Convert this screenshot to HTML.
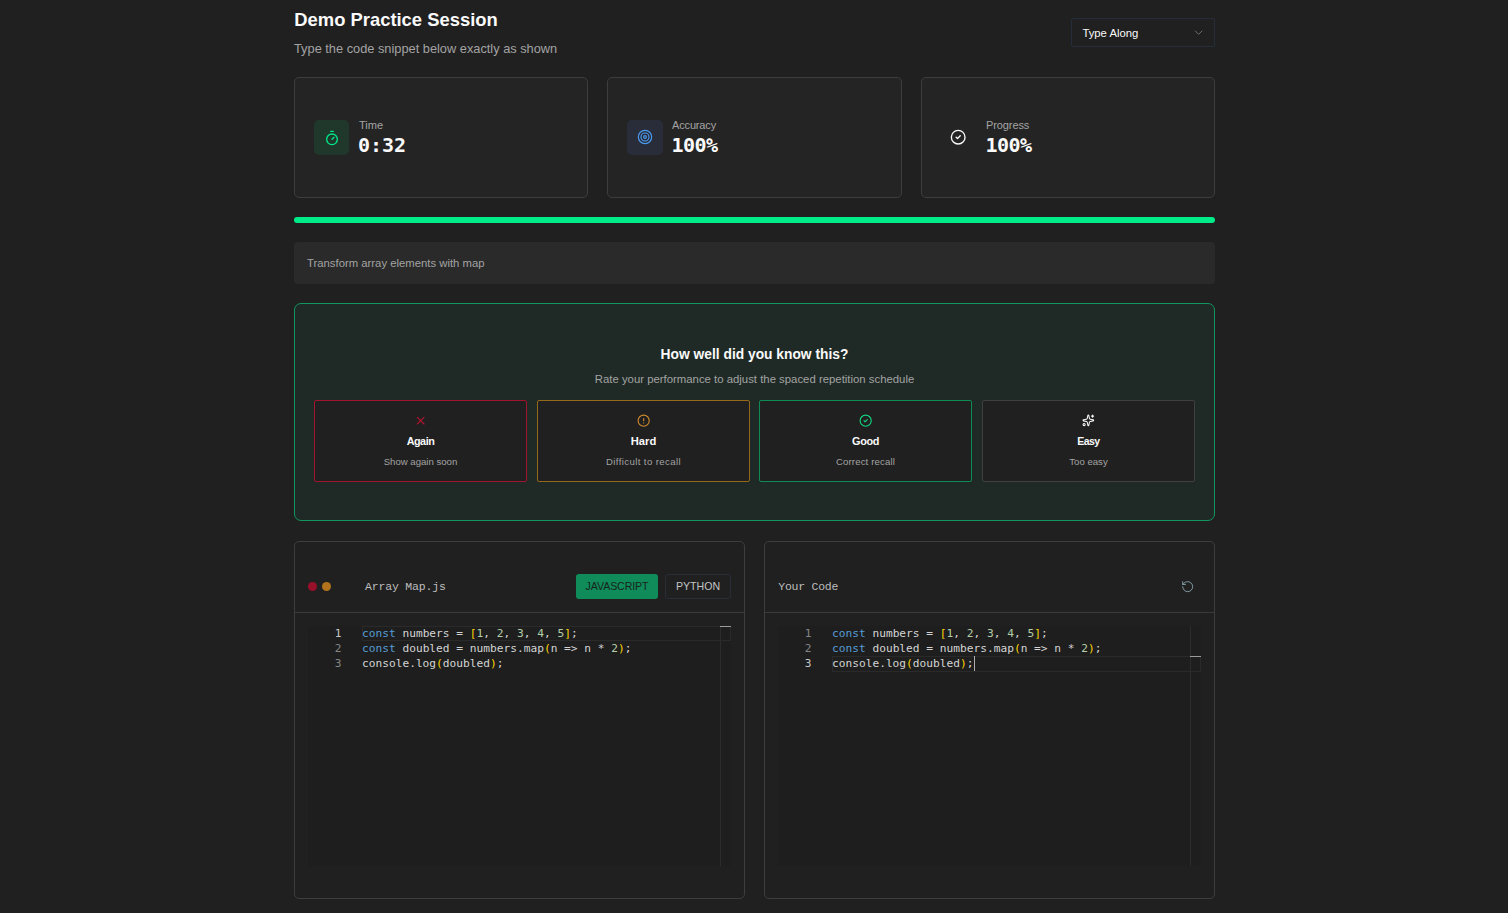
<!DOCTYPE html>
<html lang="en">
<head>
<meta charset="utf-8">
<title>Demo Practice Session</title>
<style>
*{box-sizing:border-box;margin:0;padding:0}
html,body{width:1508px;height:913px;overflow:hidden;background:#202020}
body{position:relative;font-family:"Liberation Sans",sans-serif;color:#fafafa;-webkit-font-smoothing:antialiased}
.abs{position:absolute}
.t{position:absolute;white-space:nowrap;line-height:1}
.mono{font-family:"Liberation Mono",monospace}
.dmono{font-family:"DejaVu Sans Mono",monospace}
.code{font-family:"DejaVu Sans Mono",monospace}
.card{position:absolute;background:#242424;border:1px solid #3d3d3d;border-radius:5px}
.muted{color:#a3a3a3}
svg{position:absolute;overflow:visible}
.ed{top:626px;width:423px;height:240px;background:#1e1e1e}
.ln{width:33.4px;text-align:right;font-size:11.2px;line-height:15px;color:#858585}
.ln.act{color:#c6c6c6}
.cl{font-size:11.2px;line-height:15px;color:#d4d4d4;white-space:pre}
.k{color:#569cd6}.b{color:#ffd700}.n{color:#b5cea8}
.rb{top:400px;width:213px;height:82px;border:1px solid;border-radius:2px;background:#202020}
.rl{top:435.5px;width:213px;text-align:center;font-size:11.2px;font-weight:700}
.rd{top:456.6px;width:213px;text-align:center;font-size:9.6px;color:#a3a3a3}
</style>
</head>
<body>
<!-- header -->
<div class="t" id="title" style="left:294.3px;top:10.5px;font-size:18.4px;font-weight:700;">Demo Practice Session</div>
<div class="t muted" id="subtitle" style="left:294px;top:43.2px;font-size:12.8px;">Type the code snippet below exactly as shown</div>
<div class="abs" id="select" style="left:1071px;top:18px;width:144px;height:29px;border:1px solid #252d3b;border-radius:2px;"></div>
<div class="t" id="seltext" style="left:1082.4px;top:28.1px;font-size:11.3px;">Type Along</div>
<svg id="chev" style="left:1192px;top:26px" width="13.33" height="13.33" viewBox="0 0 24 24" fill="none" stroke="#6d737a" stroke-width="1.7" stroke-linecap="round" stroke-linejoin="round"><path d="m6 9 6 6 6-6"/></svg>

<!-- stat cards -->
<div class="card" style="left:294px;top:77px;width:294px;height:121px"></div>
<div class="card" style="left:607px;top:77px;width:295px;height:121px"></div>
<div class="card" style="left:921px;top:77px;width:294px;height:121px"></div>

<div class="abs" style="left:314px;top:120px;width:35px;height:35px;border-radius:5px;background:#20372c"></div>
<svg style="left:323.5px;top:129.5px" width="16" height="16" viewBox="0 0 24 24" fill="none" stroke="#00e887" stroke-width="2" stroke-linecap="round" stroke-linejoin="round"><line x1="10" x2="14" y1="2" y2="2"/><line x1="12" x2="15" y1="14" y2="11"/><circle cx="12" cy="14" r="8"/></svg>
<div class="t muted" id="l1" style="left:359px;top:119.7px;font-size:11.1px;">Time</div>
<div class="t dmono" id="v1" style="left:358px;top:135px;font-size:20px;font-weight:700;">0:32</div>

<div class="abs" style="left:627px;top:120px;width:36px;height:35px;border-radius:5px;background:#292d3a"></div>
<svg style="left:637px;top:129px" width="16" height="16" viewBox="0 0 24 24" fill="none" stroke="#4a9af0" stroke-width="1.75" stroke-linecap="round" stroke-linejoin="round"><circle cx="12" cy="12" r="10"/><circle cx="12" cy="12" r="6"/><circle cx="12" cy="12" r="2"/></svg>
<div class="t muted" id="l2" style="left:672px;top:119.7px;font-size:11px;letter-spacing:-0.15px;">Accuracy</div>
<div class="t dmono" id="v2" style="left:671.5px;top:135px;font-size:20px;font-weight:700;letter-spacing:-0.5px;">100%</div>

<svg style="left:950.2px;top:128.5px" width="16.4" height="16.4" viewBox="0 0 24 24" fill="none" stroke="#fafafa" stroke-width="2" stroke-linecap="round" stroke-linejoin="round"><circle cx="12" cy="12" r="10"/><path d="m9 12 2 2 4-4"/></svg>
<div class="t muted" id="l3" style="left:986px;top:119.7px;font-size:11px;letter-spacing:-0.1px;">Progress</div>
<div class="t dmono" id="v3" style="left:985.5px;top:135px;font-size:20px;font-weight:700;letter-spacing:-0.5px;">100%</div>

<!-- progress bar -->
<div class="abs" style="left:293.7px;top:216.6px;width:921.6px;height:6.8px;border-radius:3.4px;background:#1d1320"></div>
<div class="abs" style="left:294px;top:217px;width:921px;height:6px;border-radius:3px;background:#00ec88"></div>

<!-- description -->
<div class="abs" style="left:294px;top:242px;width:921px;height:42px;border-radius:4px;background:#2a2a2a"></div>
<div class="t muted" id="desc" style="left:307px;top:258.2px;font-size:11.32px;">Transform array elements with map</div>

<!-- rating panel -->
<div class="abs" style="left:294px;top:303px;width:921px;height:218px;border:1px solid #12965f;border-radius:7px;background:#1f2a26"></div>

<div class="t" id="rt" style="left:294px;width:921px;text-align:center;top:348.4px;font-size:13.8px;font-weight:700;">How well did you know this?</div>
<div class="t muted" id="rs" style="left:294px;width:921px;text-align:center;top:374.1px;font-size:11.36px;">Rate your performance to adjust the spaced repetition schedule</div>

<div class="abs rb" style="left:314px;border-color:#a0142d"></div>
<div class="abs rb" style="left:537px;border-color:#96691a"></div>
<div class="abs rb" style="left:759px;border-color:#0f8c55"></div>
<div class="abs rb" style="left:982px;border-color:#404040"></div>

<svg style="left:413.5px;top:414.1px" width="13.33" height="13.33" viewBox="0 0 24 24" fill="none" stroke="#b3152f" stroke-width="2" stroke-linecap="round" stroke-linejoin="round"><path d="M18 6 6 18"/><path d="m6 6 12 12"/></svg>
<svg style="left:636.6px;top:414.1px" width="13.33" height="13.33" viewBox="0 0 24 24" fill="none" stroke="#d08a2c" stroke-width="2" stroke-linecap="round" stroke-linejoin="round"><circle cx="12" cy="12" r="10"/><line x1="12" x2="12" y1="8" y2="12"/><line x1="12" x2="12.01" y1="16" y2="16"/></svg>
<svg style="left:858.6px;top:414.1px" width="13.33" height="13.33" viewBox="0 0 24 24" fill="none" stroke="#14d982" stroke-width="2" stroke-linecap="round" stroke-linejoin="round"><circle cx="12" cy="12" r="10"/><path d="m9 12 2 2 4-4"/></svg>
<svg style="left:1081.8px;top:414.2px" width="12.7" height="12.7" viewBox="0 0 24 24" fill="none" stroke="#fafafa" stroke-width="2" stroke-linecap="round" stroke-linejoin="round"><path d="M11.017 2.814a1 1 0 0 1 1.966 0l1.051 5.558a2 2 0 0 0 1.594 1.594l5.558 1.051a1 1 0 0 1 0 1.966l-5.558 1.051a2 2 0 0 0-1.594 1.594l-1.051 5.558a1 1 0 0 1-1.966 0l-1.051-5.558a2 2 0 0 0-1.594-1.594l-5.558-1.051a1 1 0 0 1 0-1.966l5.558-1.051a2 2 0 0 0 1.594-1.594z"/><path d="M20 2v4"/><path d="M22 4h-4"/><circle cx="4" cy="20" r="2"/></svg>

<div class="t rl" id="b1" style="left:314px;letter-spacing:-0.45px;font-size:10.8px;top:435.8px;">Again</div>
<div class="t rl" id="b2" style="left:537px;">Hard</div>
<div class="t rl" id="b3" style="left:759px;letter-spacing:-0.4px;font-size:10.9px;top:435.7px;">Good</div>
<div class="t rl" id="b4" style="left:982px;letter-spacing:-0.55px;font-size:10.5px;top:436px;">Easy</div>
<div class="t rd" id="d1" style="left:314px;">Show again soon</div>
<div class="t rd" id="d2" style="left:537px;letter-spacing:0.4px;">Difficult to recall</div>
<div class="t rd" id="d3" style="left:759px;letter-spacing:0.15px;">Correct recall</div>
<div class="t rd" id="d4" style="left:982px;">Too easy</div>

<!-- code panels -->
<div class="card" style="left:294px;top:541px;width:451px;height:358px;background:#202020"></div>
<div class="card" style="left:764px;top:541px;width:451px;height:358px;background:#202020"></div>

<!-- left panel header -->
<div class="abs" style="left:295px;top:612px;width:449px;height:1px;background:#3a3a3a"></div>
<div class="abs" style="left:765px;top:612px;width:449px;height:1px;background:#3a3a3a"></div>
<div class="abs" style="left:308px;top:582px;width:9px;height:9px;border-radius:50%;background:#98102a"></div>
<div class="abs" style="left:322px;top:582px;width:9px;height:9px;border-radius:50%;background:#b2731c"></div>
<div class="t mono" id="fn" style="left:365px;top:580.8px;font-size:11.5px;letter-spacing:-0.18px;color:#bdbdbd">Array Map.js</div>
<div class="abs" style="left:576px;top:574px;width:82px;height:25px;border-radius:3px;background:#108c5a"></div>
<div class="t" id="js" style="left:576px;width:82px;text-align:center;top:581.2px;font-size:10.6px;letter-spacing:-0.1px;color:#16241d">JAVASCRIPT</div>
<div class="abs" style="left:665px;top:574px;width:66px;height:25px;border-radius:3px;border:1px solid #282d38"></div>
<div class="t" id="py" style="left:665px;width:66px;text-align:center;top:581.2px;font-size:10.6px;color:#c4c4c4">PYTHON</div>
<div class="t mono" id="yc" style="left:778.3px;top:580.8px;font-size:11.5px;letter-spacing:-0.25px;color:#bdbdbd">Your Code</div>
<svg style="left:1180.8px;top:579.8px" width="13.33" height="13.33" viewBox="0 0 24 24" fill="none" stroke="#93b0bb" stroke-width="1.5" stroke-linecap="round" stroke-linejoin="round"><path d="M3 12a9 9 0 1 0 9-9 9.75 9.75 0 0 0-6.74 2.74L3 8"/><path d="M3 3v5h5"/></svg>
<div class="abs ed" style="left:308px"></div>
<div class="abs" style="left:720px;top:626px;width:1px;height:240px;background:#2c2c2c"></div>
<div class="abs" style="left:362px;top:626px;width:369px;height:15px;border:1px solid #2a2a2a"></div>
<div class="abs" style="left:720px;top:626px;width:11px;height:1.4px;background:#9c9c9c"></div>
<div class="t code ln act" style="left:308px;top:626px">1</div>
<div class="t code cl" id="Lc1" style="left:362px;top:626px"><span class="k">const</span> numbers = <span class="b">[</span><span class="n">1</span>, <span class="n">2</span>, <span class="n">3</span>, <span class="n">4</span>, <span class="n">5</span><span class="b">]</span>;</div>
<div class="t code ln" style="left:308px;top:641px">2</div>
<div class="t code cl" id="Lc2" style="left:362px;top:641px"><span class="k">const</span> doubled = numbers.map<span class="b">(</span>n =&gt; n * <span class="n">2</span><span class="b">)</span>;</div>
<div class="t code ln" style="left:308px;top:656px">3</div>
<div class="t code cl" id="Lc3" style="left:362px;top:656px">console.log<span class="b">(</span>doubled<span class="b">)</span>;</div>
<div class="abs ed" style="left:778px"></div>
<div class="abs" style="left:1190px;top:626px;width:1px;height:240px;background:#2c2c2c"></div>
<div class="abs" style="left:832px;top:656px;width:369px;height:16px;border:1px solid #2a2a2a"></div>
<div class="abs" style="left:1190px;top:656px;width:11px;height:1.4px;background:#9c9c9c"></div>
<div class="t code ln" style="left:778px;top:626px">1</div>
<div class="t code cl" id="Rc1" style="left:832px;top:626px"><span class="k">const</span> numbers = <span class="b">[</span><span class="n">1</span>, <span class="n">2</span>, <span class="n">3</span>, <span class="n">4</span>, <span class="n">5</span><span class="b">]</span>;</div>
<div class="t code ln" style="left:778px;top:641px">2</div>
<div class="t code cl" id="Rc2" style="left:832px;top:641px"><span class="k">const</span> doubled = numbers.map<span class="b">(</span>n =&gt; n * <span class="n">2</span><span class="b">)</span>;</div>
<div class="t code ln act" style="left:778px;top:656px">3</div>
<div class="t code cl" id="Rc3" style="left:832px;top:656px">console.log<span class="b">(</span>doubled<span class="b">)</span>;</div>
<div class="abs" style="left:973.5px;top:656px;width:1.6px;height:15px;background:#aeafad"></div>
</body>
</html>
